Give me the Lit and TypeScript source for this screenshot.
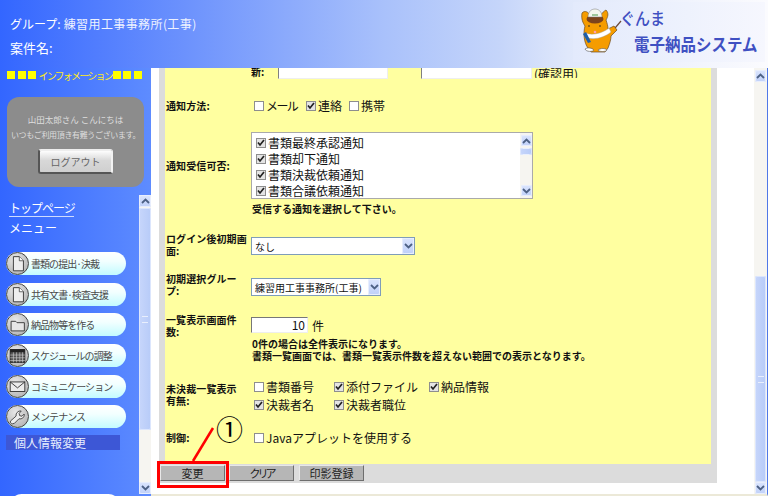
import { LitElement, html, css, svg } from "lit";
import { customElement } from "lit/decorators.js";

const ICONS: Record<string, unknown> = {
  doc: svg`<path d="M7 4h6.500L18 8.500V19.500H7z" fill="#eee" stroke="#333" stroke-width="1"/><path d="M13.500 4v4.500H18" fill="#fff" stroke="#333" stroke-width=".8"/>`,
  folder: svg`<path d="M4.500 8h5l1.500 1.500h8v9H4.500z" fill="#e6e6e6" stroke="#333" stroke-width="1"/>`,
  cal: svg`<rect x="3.500" y="5" width="16" height="14" fill="#555" stroke="#222"/><rect x="3.500" y="5" width="16" height="3" fill="#222"/><path d="M3.500 11h16M3.500 14h16M3.500 17h16M7 8v11M10.500 8v11M14 8v11M17 8v11" stroke="#ccc" stroke-width=".7"/>`,
  mail: svg`<rect x="3.500" y="6.500" width="16" height="10.500" fill="#ececec" stroke="#333"/><path d="M3.500 6.500l8 6.500 8-6.500" fill="none" stroke="#333"/>`,
  wrench: svg`<path d="M6 19.500a2.200 2.200 0 0 1-2-3.200l6-5.300c-.6-3 2-6 5.600-5.500l-2.300 2.600.6 2.500 2.500.6 2.400-2.400c.6 3.600-2.600 6-5.700 5.200l-5 5z" fill="#eee" stroke="#333" stroke-width=".9"/>`,
};

const NAV = [
  ["書類の提出·決裁", "doc"],
  ["共有文書·検査支援", "doc"],
  ["納品物等を作る", "folder"],
  ["スケジュールの調整", "cal"],
  ["コミュニケーション", "mail"],
  ["メンテナンス", "wrench"],
];

const chevron = (up: boolean) => html`<svg width="9" height="6" viewBox="0 0 9 6">
  <path d=${up ? "M1 5l3.500-3.500L8 5" : "M1 1l3.500 3.500L8 1"} fill="none" stroke="#4d6185" stroke-width="1.800"/></svg>`;

@customElement("app-root")
export class AppRoot extends LitElement {
  static styles = css`
    :host { display: block; width: 768px; height: 496px; overflow: hidden; position: relative;
      font-family: "Noto Sans CJK JP", "Liberation Sans", sans-serif; color: #111; background: #fff; }
    .page { display: grid; grid-template-columns: 151px 1fr; grid-template-rows: 68px 1fr; width: 768px; height: 496px; }

    .header { grid-column: 1 / 3; display: flex; justify-content: space-between;
      background: linear-gradient(90deg, #3366ff 0%, #a9c1fb 50%, #c5d5fa 65%, #e0e8fb 74%, #fbfbfe 100%); }
    .titles { display: flex; flex-direction: column; padding: 15px 0 0 10px; color: #fff; gap: 6px; }
    .titles div { height: 18px; line-height: 18px; white-space: nowrap; font-size: 12px; letter-spacing: .4px; color: #eef2ff; }
    .titles b { font-weight: 400; font-size: 12px; letter-spacing: 0; color: #fff; }
    .titles .case b { font-size: 13px; }
    .logo { width: 192px; height: 60px; margin: 2px 3px 0 0; display: flex;
      background: linear-gradient(90deg, #e3eafc, #eef2fd 60%, #f6f7fe); }
    .logo svg { margin: 5px 0 0 7px; flex: none; }
    .logo-text { margin-left: -8px; color: #3f50c2; display: flex; flex-direction: column; white-space: nowrap; }
    .logo-top { font-size: 15px; line-height: 22px; height: 22px; margin-top: 5px; font-weight: 500; transform-origin: left; transform: scaleY(1.15); }
    .logo-bottom { font-size: 15.500px; line-height: 22px; height: 22px; margin: 3px 0 0 14px; font-weight: 700; transform-origin: left; transform: scaleY(1.1); }

    .side { display: flex; flex-direction: column; background: linear-gradient(90deg, #3366ff, #5e8cff); min-height: 0; }
    .side-top { height: 127px; flex: none; padding: 0 7px; display: flex; flex-direction: column; }
    .info { display: flex; align-items: center; height: 14px; color: #ffea20; font-size: 10px; white-space: nowrap; }
    .sq { width: 8px; height: 8px; background: #ffff00; margin-right: 2.500px; flex: none; }
    .info span.t { margin: 0 1px 0 0; width: 74px; letter-spacing: -1.800px; }
    .card { margin-top: 15px; width: 137px; height: 90px; border-radius: 12px; background: #8c8c8c; display: flex; flex-direction: column; align-items: center; color: #dedede; white-space: nowrap; }
    .card .hi { font-size: 8.500px; line-height: 14px; margin-top: 15px; }
    .card .thanks { font-size: 8px; line-height: 14px; margin-top: 2px; letter-spacing: -.350px; }
    .logout { margin-top: 7px; width: 75px; height: 25px; box-sizing: border-box; font-size: 10px; line-height: 21px; text-align: center; color: #666;
      background: linear-gradient(#fdfdfd, #d8d8d8 45%, #cfcfcf); border: 2px solid; border-color: #eee #f2f2f2 #555 #555; border-radius: 3px; }

    .side-low { flex: 1; display: flex; min-height: 0; }
    .nav-wrap { width: 139px; flex: none; overflow: hidden; padding: 3px 0 0 6px; box-sizing: border-box; }
    .top-link { font-size: 12px; line-height: 19px; color: #fff; margin-left: 3px; width: 65px; white-space: nowrap; letter-spacing: -1px; border-bottom: 1px solid #cfdcff; height: 18px; }
    .menu { font-size: 12px; line-height: 19px; color: #fff; margin: 1px 0 0 3px; }
    .nav { display: flex; flex-direction: column; gap: 7.700px; margin-top: 15px; }
    .pill { width: 120px; height: 23px; border-radius: 12px; display: flex; align-items: center; flex: none;
      background: linear-gradient(#fff, #f2ffff 40%, #c2fbff); color: #4a4a4a; font-size: 10px; letter-spacing: -.950px; white-space: nowrap; }
    .disc { width: 23px; height: 23px; flex: none; margin-right: 2px; border-radius: 50%; box-sizing: border-box; border: 1px solid #444; background: radial-gradient(circle at 40% 30%, #e8e8e8, #aaa); overflow: hidden; display: block; }
    .current { width: 114px; height: 15px; margin-top: 7px; background: #3d57d6; color: #e8efff; font-size: 12px; line-height: 15px; padding-left: 8px; box-sizing: border-box; white-space: nowrap; }
    .peek { width: 110px; height: 23px; border-radius: 12px; margin: 44px 0 0 4px; background: #fff; }

    .bar { display: flex; flex-direction: column; flex: none; background: #f6f5f1; align-items: center; box-sizing: border-box; }
    .btn { flex: none; display: flex; align-items: center; justify-content: center; background: linear-gradient(#dbe5fd, #bfd0f9); border-radius: 2px; box-shadow: inset 0 0 0 1px #e8eefd; }
    .track { flex: 1; width: 100%; display: flex; flex-direction: column; min-height: 0; }
    .thumb { display: flex; align-items: center; justify-content: center; background: linear-gradient(90deg, #c7d6fb, #b7cbf8); border-radius: 2px; box-shadow: inset 0 0 0 1px #dce6fd; }
    .grip { width: 6px; height: 5px; border-top: 1px solid #e9effd; border-bottom: 1px solid #e9effd; position: relative; }
    .side-bar { width: 12px; height: 299px; }
    .side-bar .btn { width: 12px; height: 12px; }
    .main-bar { width: 13px; height: 426px; padding: 2px 1px 0; }
    .main-bar .btn { width: 11px; height: 12px; }
    .list-bar { width: 12px; height: 65px; padding: 2px 0; }
    .list-bar .btn { width: 11px; height: 11px; }

    .main { display: flex; min-height: 0; border-right: 1px solid #4f78e8; border-bottom: 2px solid #ece9d8; }
    .scroll { flex: 1; padding-left: 8px; padding-right: 37px; min-width: 0; }
    .frame { background: #dcdcdc; padding: 0 6px 19px; height: 415px; box-sizing: border-box; position: relative; }
    .form { height: 396px; background: #ffffa0; overflow: hidden; font-size: 12px; }
    .row { display: grid; grid-template-columns: 86px 1fr; white-space: nowrap; }
    .lab { font-size: 10px; font-weight: 700; line-height: 12px; letter-spacing: .100px; padding-left: 1px; color: #111; }
    .r-clip { height: 12px; overflow: hidden; align-items: end; }
    .clip-in { display: flex; align-items: flex-end; height: 12px; overflow: hidden; }
    .clip-in .new { width: 27px; font-size: 10px; font-weight: 700; line-height: 12px; margin-bottom: 2px; }
    .pw { height: 11px; margin-bottom: 1px; width: 110px; box-sizing: border-box; background: #fff; border-left: 1px solid #808080; border-bottom: 1px solid #eee; border-right: 1px solid #eee; flex: none; }
    .pw + .pw { margin-left: 33px; width: 111px; }
    .confirm { font-size: 12px; line-height: 16px; margin: 0 0 2px 2px; height: 12px; overflow: hidden; }
    .r-method { height: 16px; margin-top: 18px; align-items: center; }
    .r-list { height: 67px; margin-top: 18px; align-items: center; }
    .r-note { height: 12px; margin-top: 4px; }
    .r-login { height: 25px; margin-top: 18px; }
    .r-group { height: 24px; margin-top: 15px; }
    .r-count { height: 24px; margin-top: 17px; }
    .r-warn { height: 24px; }
    .r-pending { height: 34px; margin-top: 17px; }
    .r-pending .lab { padding-top: 4px; }
    .r-ctrl { height: 16px; margin-top: 17px; align-items: center; }
    .note { grid-column: 2; font-size: 10px; font-weight: 700; line-height: 12px; padding-left: 1px; }

    .checks { display: flex; align-items: center; height: 16px; font-size: 12px; line-height: 16px; padding-left: 3px; }
    .chk { display: inline-flex; align-items: center; }
    .cb { width: 10px; height: 10px; box-sizing: border-box; border: 1px solid #8e8e8e; background: #fff; margin-right: 2px; display: flex; align-items: center; justify-content: center; flex: none; }
    .cb.on { background: #e4e4e4; }
    .w52 { width: 52px; letter-spacing: -1.600px; }
    .w43 { width: 43px; }
    .mm { width: 80px; }
    .pending { display: flex; flex-direction: column; gap: 2px; }
    .mm.w95 { width: 95px; }

    .listbox { width: 282px; height: 67px; box-sizing: border-box; border: 1px solid #aaa; background: #fff; display: flex; }
    .items { flex: 1; padding: 2px 0 0 4px; overflow: hidden; }
    .items .it { height: 16px; display: flex; align-items: center; font-size: 12px; line-height: 16px; }

    .sel { height: 18px; box-sizing: border-box; border: 1px solid #7f9db9; background: #fff; display: flex; align-items: center; justify-content: space-between; font-size: 10px; padding-left: 3px; }
    .sel .btn { width: 12px; height: 16px; flex: none; }
    .sel-login { width: 164px; margin-top: 4px; }
    .sel-group { width: 130px; margin-top: 5px; }
    .count { display: flex; align-items: center; height: 16px; margin-top: 3px; font-size: 12px; }
    .num { width: 57px; height: 16px; box-sizing: border-box; background: #fff; border: 1px solid; border-color: #777 #eee #eee #777; text-align: right; padding-right: 2px; line-height: 14px; margin-right: 4px; }

    .actions { display: flex; gap: 4px; margin: 1px 0 0 -5px; }
    .action { width: 65px; height: 16px; box-sizing: border-box; background: #b6b6b6; border: 1px solid; border-color: #e8e8e8 #6e6e6e #6e6e6e #e8e8e8; font-size: 11px; line-height: 14px; text-align: center; color: #222; font-family: inherit; padding: 0; }
    .action.narrow { letter-spacing: -3px; }
    .action.wide { margin-left: 1px; }

    .annot { position: absolute; left: 0; top: 0; pointer-events: none; }
    .one { position: absolute; left: 216px; top: 411px; font-size: 27px; line-height: 36px; color: #000; }
  `;

  private scrollbar(cls: string, before: number, thumb: number) {
    return html`<div class="bar ${cls}">
      <div class="btn">${chevron(true)}</div>
      <div class="track">
        <div style="height:${before}px"></div>
        <div class="thumb" style="height:${thumb}px"><div class="grip"></div></div>
      </div>
      <div class="btn">${chevron(false)}</div>
    </div>`;
  }

  private check(label: string, on: boolean, cls = "") {
    return html`<span class="chk ${cls}"><span class="cb ${on ? "on" : ""}">${on
      ? html`<svg width="8" height="8" viewBox="0 0 8 8"><path d="M1 3.500l2 2.500 4-5" fill="none" stroke="#222" stroke-width="1.700"/></svg>`
      : ""}</span>${label}</span>`;
  }

  private mascot() {
    return html`<svg width="48" height="50" viewBox="0 0 48 50">
      <path d="M30 27L41 14" stroke="#6b4a3a" stroke-width="1.200"/>
      <path d="M2 6c-1 6 1 10 3 13-2 7-1 17 3 22l3 4h14l3-4c2-5 3-9 3-12l6-6-3-4-6 3c0-3-1-6-2-9 2-3 3-7 0-10-2 1-4 3-5 5-4-2-8-2-11 0C8 5 5 3 2 6z" fill="#f59c00" stroke="#6b4a20" stroke-width=".7"/>
      <ellipse cx="15" cy="12" rx="8.500" ry="4.500" fill="#7c431c"/>
      <path d="M8 10c0-6 4-8 7-8s7 2 7 8z" fill="#f4f6ee" stroke="#777" stroke-width=".5"/>
      <path d="M12 8h6" stroke="#4a9a4a" stroke-width="1"/>
      <circle cx="9" cy="19" r=".8" fill="#222"/><circle cx="20" cy="19" r=".8" fill="#222"/>
      <path d="M6 26c6 3 17 0 23-5l2 4c-6 5-15 8-23 6z" fill="#fff" stroke="#999" stroke-width=".4"/>
      <circle cx="15" cy="25" r="1.300" fill="#ff9fb0"/>
      <path d="M3 27l3-2 5 10-3 1z" fill="#1f5fa8"/>
      <path d="M5 42c3-2 7-1 9 1-1 2-8 2-9-1zM18 43c3-2 7-2 9 0-1 2-8 2-9 0z" fill="#fff" stroke="#555" stroke-width=".6"/>
    </svg>`;
  }

  render() {
    return html`<div class="page">
      <header class="header">
        <div class="titles">
          <div><b>グループ:</b> 練習用工事事務所(工事)</div>
          <div class="case"><b>案件名:</b></div>
        </div>
        <div class="logo">
          ${this.mascot()}
          <div class="logo-text">
            <div class="logo-top">ぐんま</div>
            <div class="logo-bottom">電子納品システム</div>
          </div>
        </div>
      </header>

      <aside class="side">
        <div class="side-top">
          <div class="info">
            <span class="sq"></span><span class="sq"></span><span class="sq"></span>
            <span class="t">インフォメーション</span>
            <span class="sq"></span><span class="sq"></span><span class="sq"></span>
          </div>
          <div class="card">
            <div class="hi">山田太郎さん こんにちは</div>
            <div class="thanks">いつもご利用頂き有難うございます。</div>
            <div class="logout">ログアウト</div>
          </div>
        </div>
        <div class="side-low">
          <div class="nav-wrap">
            <div class="top-link">トップページ</div>
            <div class="menu">メニュー</div>
            <div class="nav">
              ${NAV.map(([t, i]) => html`<div class="pill">
                <svg class="disc" viewBox="0 0 23 23">${ICONS[i]}</svg>${t}
              </div>`)}
            </div>
            <div class="current">個人情報変更</div>
            <div class="peek"></div>
          </div>
          ${this.scrollbar("side-bar", 1, 222)}
        </div>
      </aside>

      <main class="main">
        <div class="scroll">
          <div class="frame">
            <div class="form">
              <div class="row r-clip">
                <div></div>
                <div class="clip-in">
                  <span class="new">新:</span><span class="pw"></span><span class="pw"></span><span class="confirm">(確認用)</span>
                </div>
              </div>
              <div class="row r-method">
                <div class="lab">通知方法:</div>
                <div class="checks">
                  ${this.check("メール", false, "w52")}${this.check("連絡", true, "w43")}${this.check("携帯", false)}
                </div>
              </div>
              <div class="row r-list">
                <div class="lab">通知受信可否:</div>
                <div class="listbox">
                  <div class="items">
                    ${["書類最終承認通知", "書類却下通知", "書類決裁依頼通知", "書類合議依頼通知"].map(
                      (t) => html`<div class="it">${this.check(t, true)}</div>`)}
                  </div>
                  ${this.scrollbar("list-bar", 2, 7)}
                </div>
              </div>
              <div class="row r-note"><div class="note">受信する通知を選択して下さい。</div></div>
              <div class="row r-login">
                <div class="lab">ログイン後初期画<br />面:</div>
                <div class="sel sel-login">なし<div class="btn">${chevron(false)}</div></div>
              </div>
              <div class="row r-group">
                <div class="lab">初期選択グルー<br />プ:</div>
                <div class="sel sel-group">練習用工事事務所(工事)<div class="btn">${chevron(false)}</div></div>
              </div>
              <div class="row r-count">
                <div class="lab">一覧表示画面件<br />数:</div>
                <div class="count"><span class="num">10</span>件</div>
              </div>
              <div class="row r-warn">
                <div class="note">0件の場合は全件表示になります。<br />書類一覧画面では、書類一覧表示件数を超えない範囲での表示となります。</div>
              </div>
              <div class="row r-pending">
                <div class="lab">未決裁一覧表示<br />有無:</div>
                <div class="pending">
                  <div class="checks">
                    ${this.check("書類番号", false, "mm")}${this.check("添付ファイル", true, "mm w95")}${this.check("納品情報", true)}
                  </div>
                  <div class="checks">
                    ${this.check("決裁者名", true, "mm")}${this.check("決裁者職位", true)}
                  </div>
                </div>
              </div>
              <div class="row r-ctrl">
                <div class="lab">制御:</div>
                <div class="checks">${this.check("Javaアプレットを使用する", false)}</div>
              </div>
            </div>
            <div class="actions">
              <button class="action">変更</button>
              <button class="action narrow">クリア</button>
              <button class="action wide">印影登録</button>
            </div>
          </div>
        </div>
        ${this.scrollbar("main-bar", 194, 206)}
      </main>
    </div>

    <svg class="annot" width="768" height="496" viewBox="0 0 768 496">
      <path d="M213 428L193 461" stroke="#f00" stroke-width="2.500" fill="none"/>
      <rect x="158.500" y="462.500" width="69" height="24" fill="none" stroke="#f00" stroke-width="3"/>
    </svg>
    <span class="one">①</span>`;
  }
}
